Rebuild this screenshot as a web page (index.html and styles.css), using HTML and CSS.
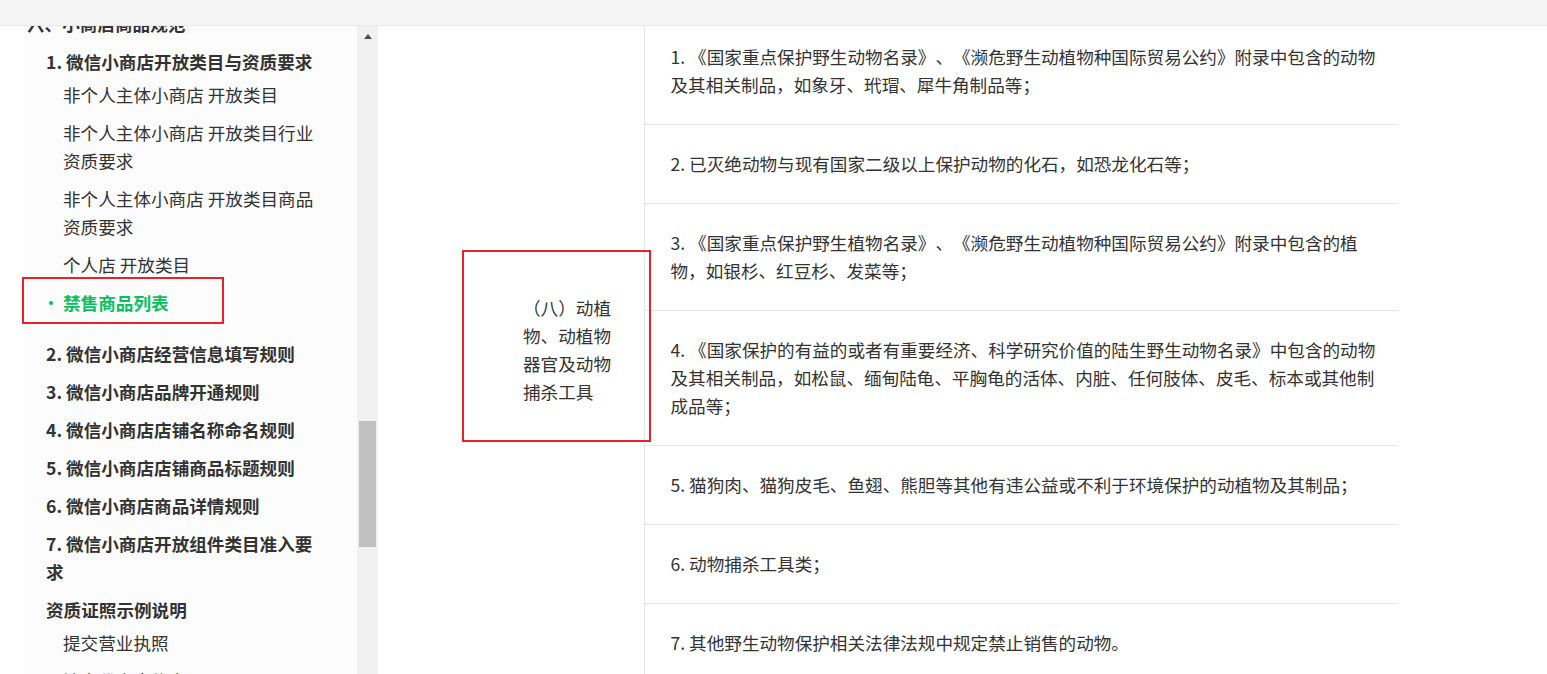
FILE: index.html
```html
<!DOCTYPE html>
<html lang="zh-CN">
<head>
  <meta charset="UTF-8">
  <meta name="viewport" content="width=device-width, initial-scale=1.0">
  <title>微信小商店 - 禁售商品列表</title>
  <link rel="stylesheet" href="styles.css">
</head>
<body>
  <header class="topbar"></header>
  <div class="layout">
    <aside class="sidebar">
      <nav class="nav">
        <div class="nav-title">六、小商店商品规范</div>
        <ul class="nav-list">
          <li class="nav-item">
            <div class="nav-link">1. 微信小商店开放类目与资质要求</div>
            <ul class="sub-list">
              <li class="sub-item">非个人主体小商店 开放类目</li>
              <li class="sub-item">非个人主体小商店 开放类目行业资质要求</li>
              <li class="sub-item">非个人主体小商店 开放类目商品资质要求</li>
              <li class="sub-item">个人店 开放类目</li>
              <li class="sub-item active">禁售商品列表</li>
            </ul>
          </li>
          <li class="nav-item"><div class="nav-link">2. 微信小商店经营信息填写规则</div></li>
          <li class="nav-item"><div class="nav-link">3. 微信小商店品牌开通规则</div></li>
          <li class="nav-item"><div class="nav-link">4. 微信小商店店铺名称命名规则</div></li>
          <li class="nav-item"><div class="nav-link">5. 微信小商店店铺商品标题规则</div></li>
          <li class="nav-item"><div class="nav-link">6. 微信小商店商品详情规则</div></li>
          <li class="nav-item"><div class="nav-link">7. 微信小商店开放组件类目准入要求</div></li>
          <li class="nav-item">
            <div class="nav-link">资质证照示例说明</div>
            <ul class="sub-list">
              <li class="sub-item">提交营业执照</li>
              <li class="sub-item">法定代表人信息</li>
            </ul>
          </li>
        </ul>
      </nav>
      <div class="scrollbar">
        <span class="scroll-up"></span>
        <span class="scroll-thumb"></span>
      </div>
    </aside>

    <main class="content">
      <table class="rules">
        <colgroup>
          <col class="col-type">
          <col class="col-desc">
        </colgroup>
        <tbody>
          <tr>
            <td class="type" rowspan="7">（八）动植物、动植物器官及动物捕杀工具</td>
            <td class="desc">1. 《国家重点保护野生动物名录》、《濒危野生动植物种国际贸易公约》附录中包含的动物及其相关制品，如象牙、玳瑁、犀牛角制品等；</td>
          </tr>
          <tr><td class="desc">2. 已灭绝动物与现有国家二级以上保护动物的化石，如恐龙化石等；</td></tr>
          <tr><td class="desc">3. 《国家重点保护野生植物名录》、《濒危野生动植物种国际贸易公约》附录中包含的植物，如银杉、红豆杉、发菜等；</td></tr>
          <tr><td class="desc">4. 《国家保护的有益的或者有重要经济、科学研究价值的陆生野生动物名录》中包含的动物及其相关制品，如松鼠、缅甸陆龟、平胸龟的活体、内脏、任何肢体、皮毛、标本或其他制成品等；</td></tr>
          <tr><td class="desc">5. 猫狗肉、猫狗皮毛、鱼翅、熊胆等其他有违公益或不利于环境保护的动植物及其制品；</td></tr>
          <tr><td class="desc">6. 动物捕杀工具类；</td></tr>
          <tr><td class="desc">7. 其他野生动物保护相关法律法规中规定禁止销售的动物。</td></tr>
        </tbody>
      </table>
    </main>

    <div class="annot annot-nav"></div>
    <div class="annot annot-cell"></div>
  </div>
</body>
</html>
```

FILE: styles.css
```css
html, body {
  margin: 0;
  padding: 0;
  height: 100%;
}
body {
  font-family: "Microsoft YaHei", "Noto Sans CJK SC", sans-serif;
  font-size: 17.6px;
  color: #333;
  background: #fff;
  overflow: hidden;
  display: flex;
  flex-direction: column;
  text-spacing-trim: space-all;
}
ul {
  list-style: none;
  margin: 0;
  padding: 0;
}

.topbar {
  height: 25px;
  flex: none;
  background: #f5f5f5;
  border-bottom: 1px solid #e8e8e8;
}

.layout {
  position: relative;
  flex: 1;
  display: flex;
  min-height: 0;
}

/* left navigation */
.sidebar {
  display: flex;
  margin-left: 24px;
  width: 354px;
  flex: none;
}
.nav {
  flex: 1;
  background: #fcfcfc;
  overflow: hidden;
  padding: 0 35px 0 3px;
  line-height: 28px;
}
.nav-title {
  margin-top: -21px;
  padding: 5px 0;
  font-weight: bold;
}
.nav-list {
  padding-left: 19px;
}
.nav-link {
  padding: 5px 0;
  font-weight: bold;
}
.sub-list {
  padding-left: 17px;
  margin-bottom: 8px;
}
.sub-item {
  position: relative;
  padding-bottom: 10px;
}
.sub-item.active {
  color: #07c160;
  font-weight: bold;
}
.sub-item.active::before {
  content: "";
  position: absolute;
  left: -14px;
  top: 12px;
  width: 4px;
  height: 4px;
  border-radius: 50%;
  background: #07c160;
}

.scrollbar {
  width: 21px;
  flex: none;
  background: #f1f1f1;
  display: flex;
  flex-direction: column;
  align-items: center;
}
.scroll-up {
  margin-top: 8px;
  width: 0;
  height: 0;
  border-left: 4.5px solid transparent;
  border-right: 4.5px solid transparent;
  border-bottom: 5px solid #505050;
}
.scroll-thumb {
  margin-top: 382px;
  width: 17px;
  height: 126px;
  background: #c1c1c1;
}

/* rules table */
.content {
  flex: 1;
  overflow: hidden;
}
.rules {
  margin: -8px 0 0 119px;
  width: 901px;
  table-layout: fixed;
  border-collapse: collapse;
  line-height: 28px;
}
.col-type {
  width: 147px;
}
.rules td {
  padding: 25px 18px 25px 26px;
}
.rules .type {
  padding: 0 26px;
  vertical-align: middle;
  border-right: 1px solid #e5e5e5;
}
.rules .desc {
  border-bottom: 1px solid #e5e5e5;
}

/* review markers */
.annot {
  position: absolute;
  border: 2px solid #e8212d;
  box-sizing: border-box;
  pointer-events: none;
}
.annot-nav {
  left: 22px;
  top: 251px;
  width: 202px;
  height: 47px;
}
.annot-cell {
  left: 462px;
  top: 224px;
  width: 189px;
  height: 192px;
}
```
